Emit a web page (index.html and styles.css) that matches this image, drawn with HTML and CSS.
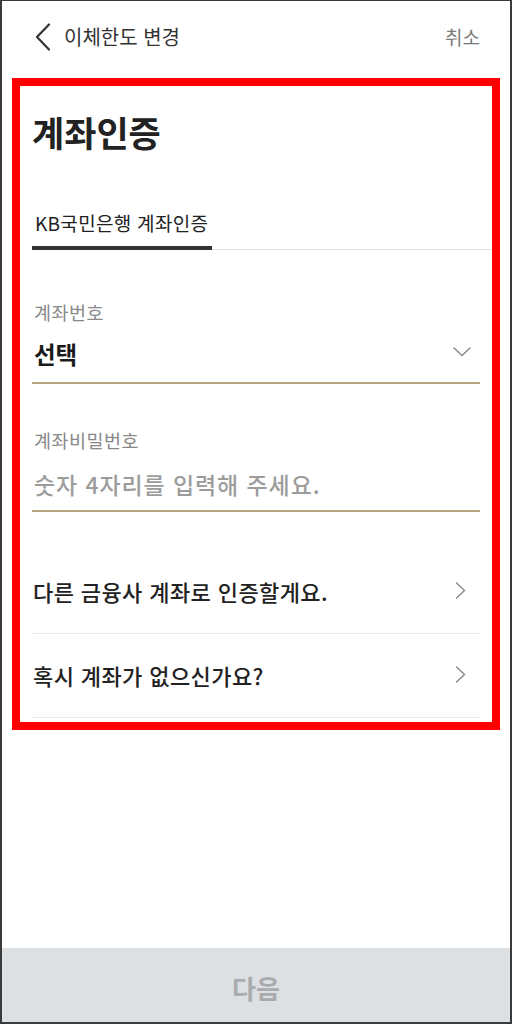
FILE: index.html
```html
<!DOCTYPE html>
<html lang="ko">
<head>
<meta charset="utf-8">
<title>이체한도 변경</title>
<link rel="stylesheet" href="styles.css">
</head>
<body>
<div class="frame">
  <header class="topbar">
    <div class="topbar-left">
      <svg class="back" width="16" height="28" viewBox="0 0 16 28"><path d="M14 1.5 L2 14 L14 26.5" fill="none" stroke="#333" stroke-width="2.2" stroke-linecap="round" stroke-linejoin="round"/></svg>
      <span class="topbar-title">이체한도 변경</span>
    </div>
    <span class="cancel">취소</span>
  </header>

  <section class="highlight">
    <h1 class="page-title">계좌인증</h1>

    <div class="tabs">
      <div class="tab active">KB국민은행 계좌인증</div>
    </div>

    <div class="field">
      <div class="field-label">계좌번호</div>
      <div class="field-input">
        <span class="select-value">선택</span>
        <svg class="chev-down" width="18" height="10" viewBox="0 0 18 10"><path d="M1 1 L9 8.5 L17 1" fill="none" stroke="#8a8a8a" stroke-width="1.5" stroke-linecap="round" stroke-linejoin="round"/></svg>
      </div>
    </div>

    <div class="field field-pw">
      <div class="field-label">계좌비밀번호</div>
      <div class="field-input">
        <span class="placeholder">숫자 4자리를 입력해 주세요.</span>
      </div>
    </div>

    <ul class="links">
      <li class="link-row">
        <span>다른 금융사 계좌로 인증할게요.</span>
        <svg class="chev-right" width="11" height="17" viewBox="0 0 11 17"><path d="M1.5 1 L9.5 8.5 L1.5 16" fill="none" stroke="#8a8a8a" stroke-width="1.5" stroke-linecap="round" stroke-linejoin="round"/></svg>
      </li>
      <li class="link-row">
        <span>혹시 계좌가 없으신가요?</span>
        <svg class="chev-right" width="11" height="17" viewBox="0 0 11 17"><path d="M1.5 1 L9.5 8.5 L1.5 16" fill="none" stroke="#8a8a8a" stroke-width="1.5" stroke-linecap="round" stroke-linejoin="round"/></svg>
      </li>
    </ul>
  </section>

  <button class="next-btn" type="button">다음</button>
</div>
</body>
</html>
```

FILE: styles.css
```css
* {
  box-sizing: border-box;
}

html, body {
  margin: 0;
  padding: 0;
  background: #ffffff;
}

body {
  font-family: "Noto Sans CJK KR", "Noto Sans", sans-serif;
  color: #222;
}

.frame {
  width: 512px;
  height: 1024px;
  border: 2px solid #3a3a3a;
  border-top-width: 1px;
  display: flex;
  flex-direction: column;
  background: #fff;
}

.topbar {
  height: 71px;
  display: flex;
  align-items: center;
  justify-content: space-between;
  padding: 0 30px 0 33px;
}

.topbar-left {
  display: flex;
  align-items: center;
  gap: 13px;
}

.back {
  display: block;
}

.topbar-title {
  font-size: 20px;
  color: #333;
  line-height: 28px;
}

.cancel {
  font-size: 19px;
  color: #7a7a7a;
  line-height: 28px;
}

.highlight {
  margin: 6px 10px 0 10px;
  border: 8px solid #ff0000;
  padding: 24px 12px 4px 12px;
}

.page-title {
  margin: 0;
  font-size: 35px;
  font-weight: 700;
  line-height: 44px;
  color: #222;
}

.tabs {
  margin-top: 55px;
  margin-right: -12px;
  display: flex;
  border-bottom: 1px solid #e3e3e3;
}

.tab {
  font-size: 19px;
  font-weight: 400;
  line-height: 28px;
  padding: 0 4px 9px 3px;
  color: #222;
  letter-spacing: 0.3px;
}

.tab.active {
  border-bottom: 4px solid #333;
  margin-bottom: -1px;
}

.field {
  margin-top: 50px;
}

.field-pw {
  margin-top: 44px;
}

.field-label {
  font-size: 18.5px;
  line-height: 24px;
  color: #888;
  padding-left: 2px;
  letter-spacing: 0.5px;
}

.field-input {
  margin-top: 15px;
  height: 45px;
  display: flex;
  align-items: flex-start;
  justify-content: space-between;
  border-bottom: 2px solid #b3a582;
  padding: 0 9px 0 2px;
}

.field-pw .field-input {
  margin-top: 17px;
  height: 43px;
}

.select-value {
  font-size: 23.5px;
  font-weight: 700;
  line-height: 30px;
  color: #1a1a1a;
}

.chev-down {
  margin-top: 8px;
}

.placeholder {
  font-size: 23px;
  font-weight: 500;
  line-height: 30px;
  color: #9c9c9c;
  letter-spacing: 0.9px;
}

.links {
  list-style: none;
  margin: 38px 0 0 0;
  padding: 0;
}

.link-row {
  height: 84px;
  display: flex;
  align-items: center;
  justify-content: space-between;
  border-bottom: 1px solid #ececec;
  padding: 0 14px 2px 1px;
  font-size: 22px;
  font-weight: 500;
  color: #222;
  letter-spacing: 0.4px;
}

.next-btn {
  margin-top: auto;
  height: 74px;
  border: none;
  background: #dde0e3;
  font-family: "Noto Sans CJK KR", "Noto Sans", sans-serif;
  font-size: 26px;
  font-weight: 700;
  color: #a9abae;
  padding: 4px 0 0 0;
  width: 100%;
}
```
